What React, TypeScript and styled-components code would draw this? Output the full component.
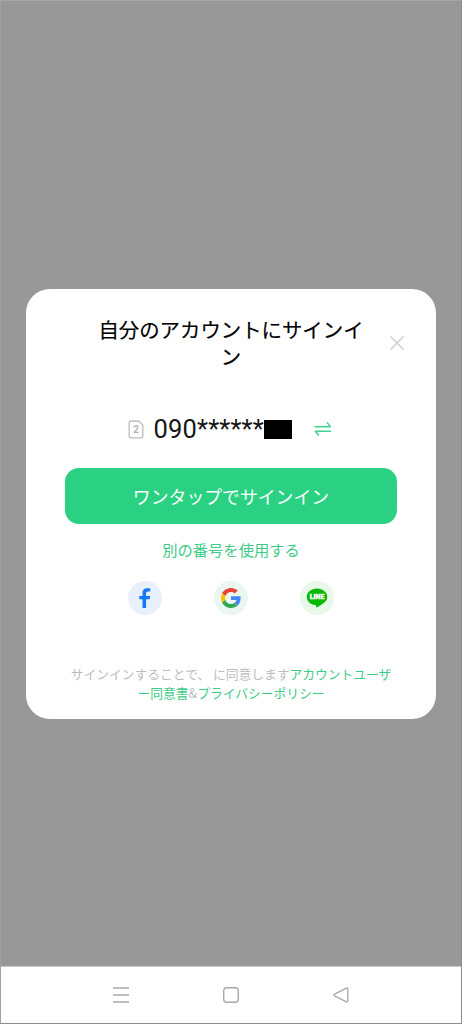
import React from "react";
import styled, { createGlobalStyle } from "styled-components";

const GREEN = "#2bd182";
const LINK = "#3ecb87";

const GlobalStyle = createGlobalStyle`
  *, *::before, *::after { box-sizing: border-box; }
  body {
    margin: 0;
    font-family: "Noto Sans CJK JP", sans-serif;
    background: #989898;
  }
`;

const Screen = styled.div`
  width: 462px;
  height: 1024px;
  display: flex;
  flex-direction: column;
  border: 1px solid #8c8c8c;
  border-top-color: #a6a6a6;
  border-left-color: #a0a0a0;
  background: #989898;
  overflow: hidden;
`;

const Backdrop = styled.main`
  flex: 1;
  padding: 288px 25px 0;
`;

const Dialog = styled.section`
  height: 430px;
  border-radius: 24px;
  background: #fff;
  display: flex;
  flex-direction: column;
  align-items: center;
`;

const Header = styled.header`
  align-self: stretch;
  display: grid;
  grid-template-columns: 68px 1fr 68px;
  align-items: center;
  height: 56px;
  margin-top: 26px;
`;

const Title = styled.h1`
  grid-column: 2;
  margin: 0;
  font-size: 20.4px;
  line-height: 27.5px;
  font-weight: 400;
  -webkit-text-stroke: 0.15px #000;
  color: #000;
  text-align: center;
  white-space: nowrap;
`;

const IconButton = styled.button`
  display: flex;
  padding: 0;
  border: 0;
  background: none;
`;

const CloseButton = styled(IconButton)`
  justify-self: start;
  margin-left: 21px;
`;

const NumberRow = styled.div`
  align-self: stretch;
  display: flex;
  align-items: center;
  height: 32px;
  margin-top: 42px;
  padding-left: 102px;
`;

const PhoneNumber = styled.span`
  margin-left: 9.5px;
  font-family: Roboto, sans-serif;
  font-size: 25.5px;
  line-height: 32px;
  letter-spacing: 0.17px;
  color: #161616;
`;

const Redaction = styled.span`
  width: 28px;
  height: 19px;
  background: #000;
`;

const SwapButton = styled(IconButton)`
  margin-left: 22px;
`;

const PrimaryButton = styled.button`
  width: 332px;
  height: 56px;
  margin-top: 23px;
  padding: 0;
  border: 0;
  border-radius: 14px;
  background: ${GREEN};
  color: #fff;
  font-family: inherit;
  font-size: 17.85px;
  line-height: 55px;
`;

const TextLink = styled.a`
  margin-top: 13px;
  font-size: 15.3px;
  line-height: 24px;
  color: ${LINK};
`;

const Providers = styled.div`
  display: flex;
  gap: 52px;
  margin-top: 20px;
`;

const Provider = styled.button<{ $tint: string }>`
  display: flex;
  align-items: center;
  justify-content: center;
  width: 34px;
  height: 34px;
  padding: 0;
  border: 0;
  border-radius: 50%;
  background: ${(p) => p.$tint};
`;

const Terms = styled.p`
  width: 330px;
  margin: 49px 0 0;
  font-size: 12.75px;
  line-height: 19px;
  color: #bdbdbd;
  text-align: center;
  white-space: nowrap;

  a { color: ${LINK}; }
`;

const NavBar = styled.nav`
  display: flex;
  align-items: center;
  justify-content: center;
  gap: 92px;
  height: 57px;
  border-top: 1px solid #c9c9c9;
  background: #fff;
`;

export default function App() {
  return (
    <Screen>
      <GlobalStyle />
      <Backdrop>
        <Dialog>
          <Header>
            <Title>
              自分のアカウントにサインイ
              <br />ン
            </Title>
            <CloseButton aria-label="閉じる">
              <svg width="16" height="16" viewBox="0 0 16 16" fill="none" stroke="#cfcfcf" strokeWidth="1.6">
                <path d="M1.5 1.5 14.5 14.5M14.5 1.5 1.5 14.5" />
              </svg>
            </CloseButton>
          </Header>

          <NumberRow>
            <svg width="16" height="19" viewBox="0 0 16 19" fill="none">
              <path
                d="M2.7 1H10.6L14.8 5V16.2Q14.8 17.8 13.2 17.8H2.7Q1.2 17.8 1.2 16.2V2.6Q1.2 1 2.7 1Z"
                stroke="#bcbcbc"
                strokeWidth="1.3"
              />
              <text x="8" y="13.1" textAnchor="middle" fontFamily="Roboto, sans-serif" fontSize="10" fontWeight="700" fill="#b3b3b3">
                2
              </text>
            </svg>
            <PhoneNumber>090******</PhoneNumber>
            <Redaction />
            <SwapButton aria-label="番号を切り替え">
              <svg width="18" height="16" viewBox="0 0 18 16" fill="none" stroke="#43d18e" strokeWidth="1.5">
                <path d="M.5 5.7H16.4L13 1.4M17.2 10.3H1.3L4.9 14.6" strokeLinejoin="round" />
              </svg>
            </SwapButton>
          </NumberRow>

          <PrimaryButton>ワンタップでサインイン</PrimaryButton>
          <TextLink>別の番号を使用する</TextLink>

          <Providers>
            <Provider $tint="#e8f0fc" aria-label="Facebook">
              <svg width="12" height="20" viewBox="0 0 12 20" fill="#1877f2">
                <path d="M3.5 20V11.2H.3V7.9H3.5V5.2C3.5 1.9 5.1.2 8.2.2H11.3V3.4H9.1C7.6 3.4 7.1 4.1 7.1 5.3V7.9H11.2L10.8 11.2H7.1V20Z" />
              </svg>
            </Provider>
            <Provider $tint="#eaf6f0" aria-label="Google">
              <svg width="20" height="20" viewBox="0 0 48 48">
                <path fill="#EA4335" d="M24 9.5c3.54 0 6.71 1.22 9.21 3.6l6.85-6.85C35.9 2.38 30.47 0 24 0 14.62 0 6.51 5.38 2.56 13.22l7.98 6.19C12.43 13.72 17.74 9.5 24 9.5z" />
                <path fill="#4285F4" d="M46.98 24.55c0-1.57-.15-3.09-.38-4.55H24v9.02h12.94c-.58 2.96-2.26 5.48-4.78 7.18l7.73 6c4.51-4.18 7.09-10.36 7.09-17.65z" />
                <path fill="#FBBC05" d="M10.53 28.59c-.48-1.45-.76-2.99-.76-4.59s.27-3.14.76-4.59l-7.98-6.19C.92 16.46 0 20.12 0 24c0 3.88.92 7.54 2.56 10.78l7.97-6.19z" />
                <path fill="#34A853" d="M24 48c6.48 0 11.93-2.13 15.89-5.81l-7.73-6c-2.15 1.45-4.92 2.3-8.16 2.3-6.26 0-11.57-4.22-13.47-9.91l-7.98 6.19C6.51 42.62 14.62 48 24 48z" />
              </svg>
            </Provider>
            <Provider $tint="#e8f8e9" aria-label="LINE">
              <svg width="22" height="20" viewBox="0 0 22 20">
                <path
                  fill="#06b900"
                  d="M11 .6C5.3.6.8 4.2.8 8.9c0 4.2 3.6 7.5 8.4 8.1.9.2 1.1.6.9 1.5-.2.9.1 1.2.9.8 2.5-1.2 6.2-3.4 8.3-5.8 1.3-1.4 1.9-2.9 1.9-4.6C21.2 4.2 16.7.6 11 .6Z"
                />
                <text
                  x="11"
                  y="11.1"
                  textAnchor="middle"
                  textLength="14.5"
                  lengthAdjust="spacingAndGlyphs"
                  fontFamily="Roboto, sans-serif"
                  fontSize="6.8"
                  fontWeight="900"
                  fill="#fff"
                  stroke="#fff"
                  strokeWidth="0.3"
                >
                  LINE
                </text>
              </svg>
            </Provider>
          </Providers>

          <Terms>
            サインインすることで、 に同意します<a>アカウントユーザ<br />ー同意書</a>&amp;<a>プライバシーポリシー</a>
          </Terms>
        </Dialog>
      </Backdrop>

      <NavBar>
        <svg width="18" height="18" viewBox="0 0 18 18" stroke="#a8a8a8" strokeWidth="1.5">
          <path d="M1 2H17M1 9H17M1 16H17" />
        </svg>
        <svg width="18" height="18" viewBox="0 0 18 18" fill="none" stroke="#a8a8a8" strokeWidth="1.4">
          <rect x="1.7" y="1.7" width="14.6" height="14.6" rx="3.2" />
        </svg>
        <svg width="18" height="18" viewBox="0 0 18 18" fill="none" stroke="#a8a8a8" strokeWidth="1.3">
          <path d="M14.5 2.2 2.6 8.1Q1.1 9 2.6 9.9L14.5 15.8Q15.8 16.3 15.8 15V3Q15.8 1.7 14.5 2.2Z" />
        </svg>
      </NavBar>
    </Screen>
  );
}
